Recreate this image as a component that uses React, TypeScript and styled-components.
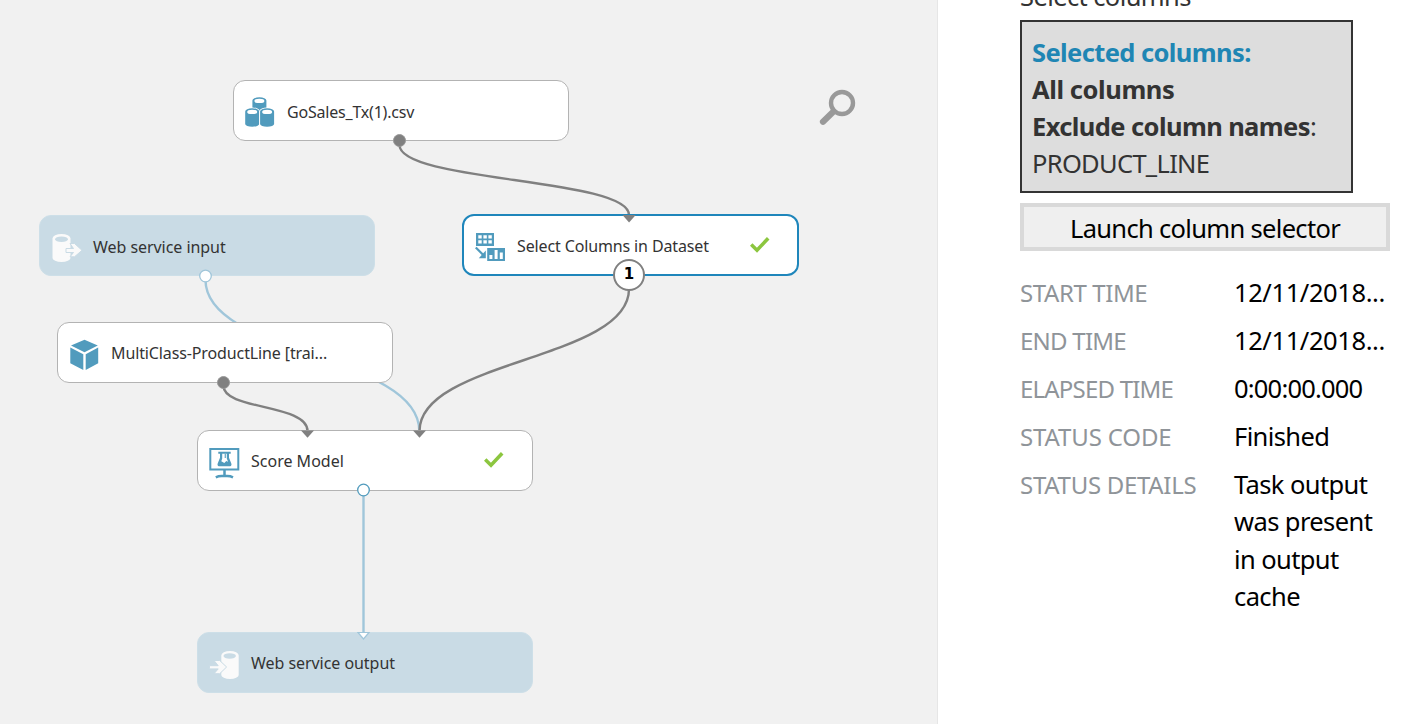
import React from "react";
import styled, { createGlobalStyle } from "styled-components";

const GlobalStyle = createGlobalStyle`
  * { box-sizing: border-box; }
  body {
    margin: 0;
    background: #fff;
    font-family: "Noto Sans", "Open Sans", sans-serif;
    overflow: hidden;
  }
`;

const Page = styled.div`
  display: flex;
  width: 100%;
  height: 724px;
  overflow: hidden;
`;

const Canvas = styled.main`
  position: relative;
  flex: none;
  width: 938px;
  height: 100%;
  background: #f1f1f1;
  border-right: 1px solid #e6e6e6;
`;

const Layer = styled.svg`
  position: absolute;
  inset: 0;
  pointer-events: none;
`;

type Kind = "module" | "selected" | "service";

const borders: Record<Kind, string> = {
  module: "1px solid #b3b3b3",
  selected: "2px solid #1f86bb",
  service: "1px solid #cddfe8",
};

const Node = styled.div<{ $x: number; $y: number; $kind: Kind }>`
  position: absolute;
  left: ${(p) => p.$x}px;
  top: ${(p) => p.$y}px;
  display: flex;
  align-items: center;
  width: ${(p) => (p.$kind === "selected" ? 337 : 336)}px;
  height: ${(p) => (p.$kind === "selected" ? 62 : 61)}px;
  padding-left: 11px;
  border: ${(p) => borders[p.$kind]};
  border-radius: 12px;
  background: ${(p) => (p.$kind === "service" ? "#c9dbe5" : "#fff")};
`;

const NodeIcon = styled.svg<{ $drop?: number }>`
  flex: none;
  width: 32px;
  height: 32px;
  margin-top: ${(p) => 4 + 2 * (p.$drop ?? 0)}px;
`;

const NodeLabel = styled.span<{ $track: number; $lift?: number }>`
  flex: none;
  width: 230px;
  margin-left: 10px;
  padding-top: 2px;
  margin-bottom: ${(p) => 2 * (p.$lift ?? 0)}px;
  font-size: 16px;
  line-height: 24px;
  letter-spacing: ${(p) => p.$track}px;
  white-space: nowrap;
  color: #333;
`;

const Check = styled.svg`
  flex: none;
  width: 20px;
  height: 18px;
  margin: 0 0 1px 3px;
`;

const RunBadge = styled.div`
  position: absolute;
  left: 613px;
  top: 259px;
  display: flex;
  align-items: center;
  justify-content: center;
  width: 32px;
  height: 32px;
  padding-bottom: 2px;
  border: 2px solid #808080;
  border-radius: 50%;
  background: #fff;
  font-family: "DejaVu Sans", sans-serif;
  font-size: 15px;
  font-weight: 700;
  color: #000;
`;

const Panel = styled.aside`
  flex: 1;
  padding: 0 20px 0 82px;
  font-size: 25.5px;
  line-height: 37px;
  color: #333;
`;

const FieldTitle = styled.div`
  height: 37px;
  margin-top: -22px;
  letter-spacing: -0.6px;
`;

const SelectionBox = styled.div`
  width: 333px;
  height: 173px;
  margin-top: 5px;
  padding: 12px 10px 9px;
  border: 2px solid #333;
  background: #ddd;
`;

const SelectionLine = styled.div<{ $accent?: boolean; $track: number }>`
  white-space: nowrap;
  letter-spacing: ${(p) => p.$track}px;
  color: ${(p) => (p.$accent ? "#1f86b4" : "#333")};
`;

const LaunchButton = styled.button`
  display: block;
  width: 370px;
  height: 48px;
  margin: 10px 0 23px;
  padding: 3px 0 0;
  border: 4px solid #d9d9d9;
  background: #efefef;
  font: inherit;
  letter-spacing: -0.68px;
  color: #000;
`;

const Details = styled.dl`
  display: grid;
  grid-template-columns: 214px 154px;
  grid-auto-rows: minmax(37px, auto);
  row-gap: 11px;
  margin: 0;
`;

const Term = styled.dt<{ $track: number }>`
  font-size: 24px;
  letter-spacing: ${(p) => p.$track}px;
  white-space: nowrap;
  color: #8f9499;
`;

const Value = styled.dd<{ $track: number; $multi: boolean }>`
  margin: 0;
  letter-spacing: ${(p) => p.$track}px;
  white-space: pre-line;
  color: #000;
  line-height: ${(p) => (p.$multi ? 37.25 : 37)}px;
`;

const BLUE = "#519bbd";

const CheckMark = () => (
  <Check viewBox="0 0 20 18">
    <path d="M1.2 8.5 L7 14.300 L18.2 2.200" fill="none" stroke="#8cc63f" strokeWidth="3.500" />
  </Check>
);

const Can = ({ x, y, h }: { x: number; y: number; h: number }) => (
  <g>
    <path
      d={`M${x} ${y + 3}a7 3.200 0 0 1 14 0v${h}a7 2.800 0 0 1 -14 0z`}
      fill={BLUE}
      stroke="#fff"
      strokeWidth="1.500"
      paintOrder="stroke"
    />
    <ellipse cx={x + 7} cy={y + 3.500} rx="5" ry="2.200" fill="#fff" />
  </g>
);

const DatasetIcon = () => (
  <NodeIcon viewBox="0 0 32 32" $drop={0.5}>
    <Can x={7.400} y={0.400} h={9} />
    <Can x={0.200} y={11.400} h={12.500} />
    <Can x={15.100} y={11.400} h={12.500} />
  </NodeIcon>
);

const ColumnsIcon = () => (
  <NodeIcon viewBox="0 0 32 32" $drop={1}>
    <path
      fill={BLUE}
      fillRule="evenodd"
      d="M1 1h18v13H1zM3.300 3.200v3.300h3.400V3.200zM8.400 3.200v3.300h3.400V3.200zM13.400 3.200v3.300h3.400V3.200zM3.300 8.300v3.300h3.400V8.300zM8.400 8.300v3.300h3.400V8.300zM13.400 8.300v3.300h3.400V8.300z"
    />
    <path
      fill={BLUE}
      fillRule="evenodd"
      d="M12.200 16H30v13H12.200zM14.400 23v4h3v-4zM19.600 18v9h3v-9zM24.800 20.500v6.500h3v-6.500z"
    />
    <path d="M.8 15.500L8.500 23.200" stroke={BLUE} strokeWidth="2.200" />
    <path d="M10.800 18.500v7.700H3.800z" fill={BLUE} />
  </NodeIcon>
);

const CubeIcon = () => (
  <NodeIcon viewBox="0 0 32 32">
    <path fill={BLUE} d="M15.500 .8L28.800 6.400L15.500 13.200L2 6.400z" />
    <path fill={BLUE} d="M1.300 8.500L14.300 15.200V31L1.300 24.300z" />
    <path fill={BLUE} d="M29.200 8.500L16.700 15.200V31L29.200 24.300z" />
  </NodeIcon>
);

const ScoreIcon = () => (
  <NodeIcon viewBox="0 0 32 32">
    <rect x="1.300" y="2" width="28" height="20.500" fill="none" stroke={BLUE} strokeWidth="2" />
    <path d="M15.500 23v5.500M6.800 30.300c2-1 4-1.200 6-1.200h5.200c2 0 4 .2 6 1.200" fill="none" stroke={BLUE} strokeWidth="2.500" />
    <path fill={BLUE} d="M9.300 4.800h12.400v2h-1.700v4l2.300 5.800c.5 1.500 0 2.600-1.200 2.600H9.900c-1.200 0-1.700-1.100-1.200-2.600l2.300-5.800V6.800H9.300z" />
    <path fill="#fff" d="M13.200 6.800h4.600v4.600l1.300 3.300-1.800-.8-2 2.100-3-1.800 .9-2.800z" />
    <path fill={BLUE} d="M15.700 6.800h1.100v4.200h-1.100z" />
  </NodeIcon>
);

const InputIcon = () => (
  <NodeIcon viewBox="0 0 32 32" $drop={1}>
    <path d="M1.500 5.500a9 4.500 0 0 1 18 0V25a9 4 0 0 1-18 0z" fill="#fafafa" />
    <ellipse cx="10.500" cy="6.200" rx="6.500" ry="2.800" fill="#c9dbe5" />
    <path
      d="M15 15.500h7.500l-3.500-5h4.500L31 17.300l-7.500 6.500H19l3.500-4.300H15z"
      fill="#fafafa"
      stroke="#c9dbe5"
      strokeWidth="1"
    />
  </NodeIcon>
);

const OutputIcon = () => (
  <NodeIcon viewBox="0 0 32 32" $drop={1}>
    <path d="M12.300 5.500a8.700 4.500 0 0 1 17.400 0V25a8.700 4 0 0 1-17.400 0z" fill="#fafafa" />
    <ellipse cx="20.700" cy="6" rx="6.200" ry="2.700" fill="#c9dbe5" />
    <path
      d="M.4 15.700h8.800L5 10.500h5.700L17.600 17l-6.900 6.700H5l4.200-4.800H.4z"
      fill="#fafafa"
      stroke="#c9dbe5"
      strokeWidth="1"
    />
  </NodeIcon>
);

interface NodeData {
  label: string;
  x: number;
  y: number;
  kind: Kind;
  track: number;
  lift?: number;
  icon: React.ReactNode;
  done?: boolean;
}

const nodes: NodeData[] = [
  { label: "GoSales_Tx(1).csv", x: 233, y: 80, kind: "module", track: -0.2, icon: <DatasetIcon /> },
  { label: "Select Columns in Dataset", x: 462, y: 214, kind: "selected", track: -0.13, icon: <ColumnsIcon />, done: true },
  { label: "Web service input", x: 39, y: 215, kind: "service", track: -0.05, icon: <InputIcon /> },
  { label: "MultiClass-ProductLine [trai...", x: 57, y: 322, kind: "module", track: -0.12, lift: 1, icon: <CubeIcon /> },
  { label: "Score Model", x: 197, y: 430, kind: "module", track: 0, lift: 1, icon: <ScoreIcon />, done: true },
  { label: "Web service output", x: 197, y: 632, kind: "service", track: -0.05, lift: 1, icon: <OutputIcon /> },
];

const details = [
  { term: "START TIME", value: "12/11/2018...", tt: -0.4, vt: -0.4 },
  { term: "END TIME", value: "12/11/2018...", tt: -0.75, vt: -0.4 },
  { term: "ELAPSED TIME", value: "0:00:00.000", tt: -0.8, vt: -0.8 },
  { term: "STATUS CODE", value: "Finished", tt: -0.15, vt: -0.6 },
  { term: "STATUS DETAILS", value: "Task output\nwas present\nin output\ncache", tt: -0.3, vt: -0.6 },
];

export default function App() {
  return (
    <Page>
      <GlobalStyle />
      <Canvas>
        <Layer width="937" height="724" fill="none" strokeWidth="2.400">
          <path d="M205.500 280C205.500 355 419.300 355 419.300 431" stroke="#a0c6da" />
          <path d="M399.500 145C399.500 182 629 178 629 215" stroke="#808080" />
          <path d="M629 289C629 360 419.500 360 419.500 431" stroke="#808080" />
          <path d="M223.500 386C223.500 410 307.500 404 307.500 431" stroke="#808080" />
          <path d="M363.500 494V633" stroke="#a0c6da" />
        </Layer>
        {nodes.map((n) => (
          <Node key={n.label} $x={n.x} $y={n.y} $kind={n.kind}>
            {n.icon}
            <NodeLabel $track={n.track} $lift={n.lift}>{n.label}</NodeLabel>
            {n.done && <CheckMark />}
          </Node>
        ))}
        <Layer width="937" height="724">
          <g fill="#808080">
            <circle cx="399.500" cy="140.500" r="6" stroke="#999" />
            <circle cx="223.500" cy="382.500" r="6" stroke="#999" />
            <path d="M622.500 215h13.200l-6.600 7.500z" />
            <path d="M301 430.500h13l-6.500 7.200z" />
            <path d="M413 430.500h13l-6.500 7.200z" />
          </g>
          <circle cx="205.500" cy="276" r="5.800" fill="#fff" stroke="#a0c6da" strokeWidth="1.300" />
          <circle cx="363.500" cy="490" r="5.800" fill="#fff" stroke="#519bbd" strokeWidth="1.300" />
          <path d="M358 632.500h11l-5.500 6.500z" fill="#fff" stroke="#a0c6da" strokeWidth="1.200" />
          <g fill="none" stroke="#999">
            <circle cx="842" cy="103" r="11" strokeWidth="4.400" />
            <path d="M833.500 111.500L823 121.800" strokeWidth="6.200" strokeLinecap="round" />
          </g>
        </Layer>
        <RunBadge>1</RunBadge>
      </Canvas>
      <Panel>
        <FieldTitle>Select columns</FieldTitle>
        <SelectionBox>
          <SelectionLine $accent $track={-0.6}><b>Selected columns:</b></SelectionLine>
          <SelectionLine $track={-0.42}><b>All columns</b></SelectionLine>
          <SelectionLine $track={-0.6}><b>Exclude column names</b>:</SelectionLine>
          <SelectionLine $track={-0.7}>PRODUCT_LINE</SelectionLine>
        </SelectionBox>
        <LaunchButton>Launch column selector</LaunchButton>
        <Details>
          {details.map((d) => (
            <React.Fragment key={d.term}>
              <Term $track={d.tt}>{d.term}</Term>
              <Value $track={d.vt} $multi={d.value.includes("\n")}>{d.value}</Value>
            </React.Fragment>
          ))}
        </Details>
      </Panel>
    </Page>
  );
}
